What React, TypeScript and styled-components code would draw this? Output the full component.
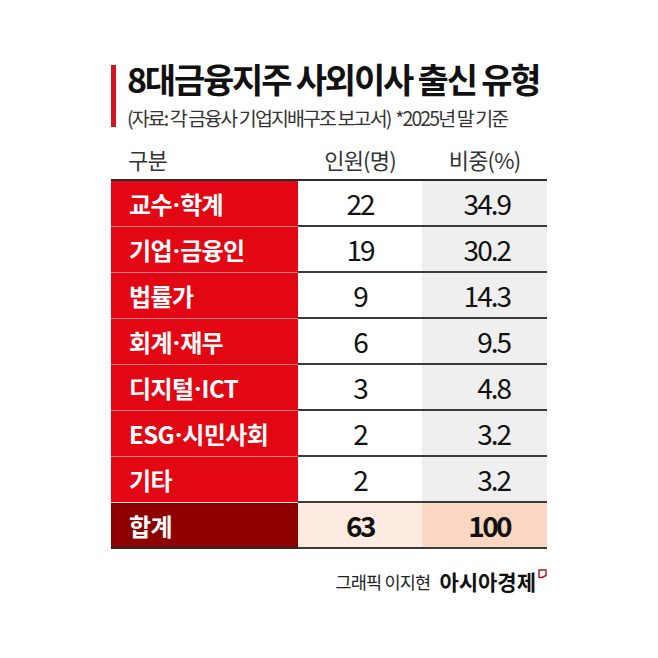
import React from "react";
import styled, { createGlobalStyle } from "styled-components";

const Global = createGlobalStyle`
  html, body { margin: 0; padding: 0; background: #fff; }
  body { font-family: "Noto Sans CJK KR", "Noto Sans", sans-serif; }
`;

const Page = styled.div`
  width: 658px;
  height: 658px;
  box-sizing: border-box;
  padding: 59px 111px 0 111px;
  background: #fff;
  display: flex;
  flex-direction: column;
`;

const TitleBlock = styled.div`
  display: flex;
  gap: 11px;
  align-items: flex-start;
`;

const Bar = styled.div`
  width: 5px;
  background: #d4141e;
  margin-top: 6px;
  height: 62px;
`;

const TitleText = styled.div`
  display: flex;
  flex-direction: column;
`;

const Title = styled.h1`
  margin: 0;
  font-size: 34px;
  font-weight: 700;
  letter-spacing: -2.2px;
  line-height: 40px;
  color: #111;
  white-space: nowrap;
`;

const Sub = styled.div`
  margin-top: 6px;
  font-size: 19.5px;
  font-weight: 400;
  letter-spacing: -1.9px;
  line-height: 26px;
  color: #333;
  white-space: nowrap;
`;

const Table = styled.div`
  margin-top: 8px;
  display: grid;
  grid-template-columns: 187px 124px 125px;
`;

const Head = styled.div<{ $align: "left" | "center" }>`
  height: 40px;
  display: flex;
  align-items: center;
  justify-content: ${(p) => (p.$align === "left" ? "flex-start" : "center")};
  padding-left: ${(p) => (p.$align === "left" ? "17px" : "0")};
  font-size: 22px;
  font-weight: 400;
  letter-spacing: -0.8px;
  color: #333;
  border-bottom: 2px solid #2a2a2a;
`;

const Label = styled.div<{ $total?: boolean; $last?: boolean }>`
  height: 46px;
  box-sizing: border-box;
  display: flex;
  align-items: center;
  padding-left: 18px;
  background: ${(p) => (p.$total ? "#8e0000" : "#e30613")};
  color: #fff;
  font-size: 24px;
  font-weight: 700;
  letter-spacing: -0.6px;
  white-space: nowrap;
  border-bottom: ${(p) =>
    p.$total ? "2px solid #2a2a2a" : p.$last ? "1.5px solid #fbe3e3" : "1px solid #f27a80"};
`;

const Dot = styled.span`
  font-family: "Noto Sans", sans-serif;
  padding: 0 1px;
`;

const Num = styled.div<{ $bg: string; $total?: boolean; $right?: boolean }>`
  height: 46px;
  box-sizing: border-box;
  display: flex;
  align-items: center;
  justify-content: ${(p) => (p.$right ? "flex-end" : "center")};
  padding-right: ${(p) => (p.$right ? "37px" : "0")};
  background: ${(p) => p.$bg};
  color: #111;
  font-size: 28px;
  font-weight: ${(p) => (p.$total ? 700 : 400)};
  letter-spacing: ${(p) => (p.$total ? "-2.6px" : "-2px")};
  border-bottom: 2px solid #3a3a3a;
`;

const Footer = styled.div`
  margin-top: 17px;
  display: flex;
  justify-content: flex-end;
  align-items: center;
  gap: 9px;
`;

const Credit = styled.span`
  font-size: 17.5px;
  font-weight: 400;
  letter-spacing: -0.8px;
  color: #222;
`;

const Brand = styled.span`
  display: flex;
  align-items: flex-start;
  gap: 2px;
  font-size: 21px;
  font-weight: 700;
  letter-spacing: 0px;
  color: #111;
`;

const Mark = () => (
  <svg width="9" height="10" viewBox="0 0 9 10" style={{ marginTop: 3 }}>
    <path d="M1 1 H8 V6.5 L4 8.5 H1 Z" fill="none" stroke="#b3121c" strokeWidth="1.4" />
  </svg>
);

const rows: [string, string, string][] = [
  ["교수·학계", "22", "34.9"],
  ["기업·금융인", "19", "30.2"],
  ["법률가", "9", "14.3"],
  ["회계·재무", "6", "9.5"],
  ["디지털·ICT", "3", "4.8"],
  ["ESG·시민사회", "2", "3.2"],
  ["기타", "2", "3.2"],
];

const renderLabel = (l: string) => {
  const parts = l.split("·");
  return parts.map((part, i) => (
    <React.Fragment key={i}>
      {i > 0 && <Dot>·</Dot>}
      {part}
    </React.Fragment>
  ));
};

export default function App() {
  return (
    <Page>
      <Global />
      <TitleBlock>
        <Bar />
        <TitleText>
          <Title>8대금융지주 사외이사 출신 유형</Title>
          <Sub>(자료: 각 금융사 기업지배구조 보고서)&nbsp; *2025년 말 기준</Sub>
        </TitleText>
      </TitleBlock>
      <Table>
        <Head $align="left">구분</Head>
        <Head $align="center">인원(명)</Head>
        <Head $align="center">비중(%)</Head>
        {rows.map(([l, n, p], i) => (
          <React.Fragment key={l}>
            <Label $last={i === rows.length - 1}>{renderLabel(l)}</Label>
            <Num $bg="#ffffff">{n}</Num>
            <Num $bg="#efefef" $right>
              {p}
            </Num>
          </React.Fragment>
        ))}
        <Label $total>합계</Label>
        <Num $bg="#fdebe2" $total>
          63
        </Num>
        <Num $bg="#fbd7c3" $total $right>
          100
        </Num>
      </Table>
      <Footer>
        <Credit>그래픽 이지현</Credit>
        <Brand>
          아시아경제
          <Mark />
        </Brand>
      </Footer>
    </Page>
  );
}
